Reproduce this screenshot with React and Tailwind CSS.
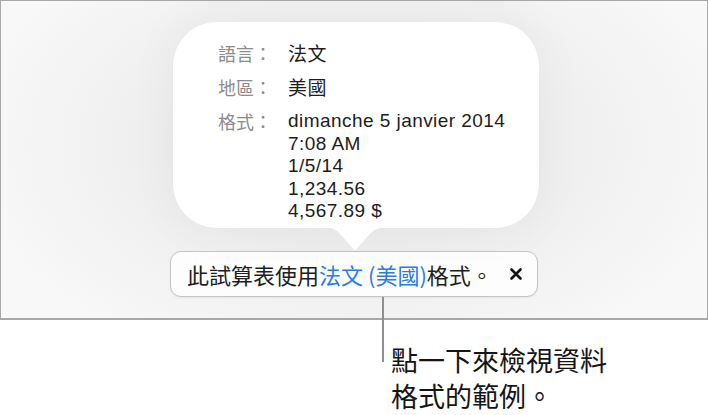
import React from 'react'

const latin = "font-['Liberation_Sans','Noto_Sans_CJK_TC',sans-serif]"
const cjk = "font-['Noto_Sans_CJK_TC','Liberation_Sans',sans-serif]"

function Row({ label, children }) {
  return (
    <>
      <div className={`${cjk} text-[18px] leading-[22.5px] text-[#8b8b8b]`}>{label}</div>
      <div className={`${latin} text-[19px] leading-[22.5px] tracking-[0.45px] text-[#1c1c1c]`}>{children}</div>
    </>
  )
}

export default function App() {
  return (
    <div className="relative w-[708px] h-[415px] bg-white">
      <div className="h-[320px] border border-b-2 border-[#a8a8a8] bg-[radial-gradient(ellipse_55%_75%_at_50%_45%,#e8e8e8_0%,#ededed_45%,#f8f8f8_100%)] pt-[21px]">
        <div className="relative ml-[172px] w-[366px] h-[206px] rounded-[44px] bg-white shadow-[0_0_40px_10px_rgba(0,0,0,0.03)] pl-[45px] pt-[20px]">
          <div className="grid grid-cols-[70px_1fr] gap-y-[9.5px]">
            <Row label="語言：">
              <span className={`${cjk} text-[19px]`}>法文</span>
            </Row>
            <Row label="地區：">
              <span className={`${cjk} text-[19px]`}>美國</span>
            </Row>
            <Row label="格式：">
              <div>dimanche 5 janvier 2014</div>
              <div>7:08 AM</div>
              <div>1/5/14</div>
              <div>1,234.56</div>
              <div>4,567.89 $</div>
            </Row>
          </div>
          <svg className="absolute left-[152px] top-[205px]" width="60" height="24" viewBox="0 0 60 24">
            <path d="M0 0 C8 1 12 3 17 9 L28.6 22.4 Q30 23.6 31.4 22.4 L43 9 C48 3 52 1 60 0 Z" fill="#ffffff" />
          </svg>
        </div>
        <div className="ml-[169px] mt-[23px] w-[368px] h-[46px] rounded-[11px] border border-[#c4c4c4] bg-[#fdfdfd] shadow-[0_1px_2px_rgba(0,0,0,0.06)] flex items-center pl-[16px] pr-[15px]">
          <span className={`${cjk} text-[22px] leading-none text-[#1d1d1d] whitespace-nowrap`}>
            此試算表使用<span className="text-[#2a7be6]">法文 (美國)</span>格式。
          </span>
          <svg className="ml-auto" width="12" height="12" viewBox="0 0 12 12">
            <path d="M1.5 1.5 L10.5 10.5 M10.5 1.5 L1.5 10.5" stroke="#151515" strokeWidth="2.6" strokeLinecap="round" />
          </svg>
        </div>
      </div>
      <div className="absolute left-[382px] top-[297px] w-[2px] h-[65px] bg-[#8f8f8f]" />
      <div className={`${cjk} ml-[391px] mt-[22px] text-[27px] leading-[36px] text-[#151515]`}>
        <div>點一下來檢視資料</div>
        <div>格式的範例。</div>
      </div>
    </div>
  )
}
